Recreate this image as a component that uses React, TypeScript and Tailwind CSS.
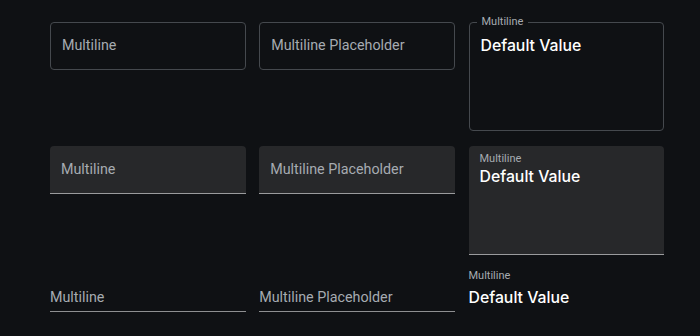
import React from "react";

const font = { fontFamily: "Roboto, 'Noto Sans', sans-serif" };
const valueFont = { fontFamily: "Inter, Roboto, sans-serif" };

function Outlined({ text }: { text: string }) {
  return (
    <div className="w-[195.5px] h-[48px] border border-[#45494e] rounded-[4px] flex items-center px-[11px] text-[14.3px] text-[#a6abb1]">
      {text}
    </div>
  );
}

function Value() {
  return (
    <div className="text-[15.8px] leading-[20px] font-medium text-white" style={valueFont}>
      Default Value
    </div>
  );
}

function OutlinedValue() {
  return (
    <div className="relative w-[195.5px] h-[109px] border border-[#45494e] rounded-[4px] px-[11px] pt-[13px]">
      <span className="absolute -top-[7px] left-[7px] px-[5px] bg-[#0f1114] text-[11px] leading-[12px] text-[#a6abb1]">
        Multiline
      </span>
      <Value />
    </div>
  );
}

function Filled({ text }: { text: string }) {
  return (
    <div className="w-[195.5px] h-[48px] bg-[#27282a] rounded-t-[4px] border-b border-[#9a9b9d] flex items-center px-[11px] pt-[1px] text-[14.3px] text-[#a6abb1]">
      {text}
    </div>
  );
}

function FilledValue() {
  return (
    <div className="w-[195.5px] h-[109px] bg-[#27282a] rounded-t-[4px] border-b border-[#9a9b9d] px-[11px] pt-[7px]">
      <div className="text-[11px] leading-[12px] text-[#a6abb1]">Multiline</div>
      <div className="mt-[2px]">
        <Value />
      </div>
    </div>
  );
}

function Standard({ text }: { text: string }) {
  return (
    <div className="w-[195.5px] border-b border-[#8e8f91] pb-[4px] text-[14.3px] leading-[20px] text-[#a6abb1]">
      {text}
    </div>
  );
}

function StandardValue() {
  return (
    <div className="w-[195.5px] pb-[4px]">
      <div className="text-[11px] leading-[12px] text-[#a6abb1]">Multiline</div>
      <div className="mt-[6px]">
        <Value />
      </div>
    </div>
  );
}

export default function App() {
  return (
    <div className="w-[700px] h-[336px] bg-[#0f1114] pl-[50px] pt-[22px] overflow-hidden" style={font}>
      <div className="flex items-start gap-[13.75px] h-[109px]">
        <Outlined text="Multiline" />
        <Outlined text="Multiline Placeholder" />
        <OutlinedValue />
      </div>
      <div className="flex items-start gap-[13.75px] h-[109px] mt-[15px]">
        <Filled text="Multiline" />
        <Filled text="Multiline Placeholder" />
        <FilledValue />
      </div>
      <div className="flex items-end gap-[13.75px] h-[57px]">
        <Standard text="Multiline" />
        <Standard text="Multiline Placeholder" />
        <StandardValue />
      </div>
    </div>
  );
}
